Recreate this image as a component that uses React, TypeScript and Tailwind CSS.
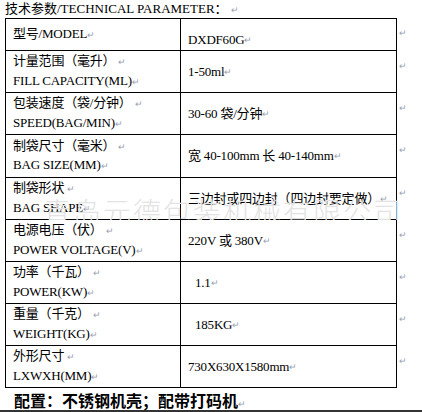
import React from 'react';

type Row = {
  label: string[];
  value: string;
  h: string;
  indent?: boolean;
  low?: boolean;
  mark?: boolean;
};

const rows: Row[] = [
  { label: ['型号/MODEL'], value: 'DXDF60G', h: 'h-[33px] border-t', low: true },
  { label: ['计量范围（毫升）', 'FILL CAPACITY(ML)'], value: '1-50ml', h: 'h-[42px]' },
  { label: ['包装速度（袋/分钟）', 'SPEED(BAG/MIN)'], value: '30-60 袋/分钟', h: 'h-[42px]' },
  { label: ['制袋尺寸（毫米）', 'BAG SIZE(MM)'], value: '宽 40-100mm 长 40-140mm', h: 'h-[43px]' },
  { label: ['制袋形状', 'BAG SHAPE'], value: '三边封或四边封（四边封要定做）', h: 'h-[42px]', mark: true },
  { label: ['电源电压（伏）', 'POWER VOLTAGE(V)'], value: '220V 或 380V', h: 'h-[42px]' },
  { label: ['功率（千瓦）', 'POWER(KW)'], value: '1.1', h: 'h-[42px]', indent: true },
  { label: ['重量（千克）', 'WEIGHT(KG)'], value: '185KG', h: 'h-[42px]', indent: true },
  { label: ['外形尺寸', 'LXWXH(MM)'], value: '730X630X1580mm', h: 'h-[42px]' },
];

const Ret = () => <span className="text-[9px] text-gray-400 align-middle">↵</span>;

export default function App() {
  return (
    <div className="w-[422px] h-[412px] bg-white text-black font-['Liberation_Serif','Noto_Sans_CJK_SC',serif] overflow-hidden">
      <div className="pl-[5px] h-[18px] leading-[18px] text-[13px]">
        技术参数/TECHNICAL PARAMETER： <Ret />
      </div>
      <div className="pl-[5px]">
        {rows.map((r, i) => (
          <div key={i} className={`relative flex ${r.mark ? 'overflow-hidden' : ''}`}>
            <div className={`flex w-[392px] border-x border-b border-black ${r.h}`}>
              <div className="w-[175px] border-r border-black pl-[7px] flex flex-col justify-center text-[13px] leading-[18px] tracking-[-0.2px]">
                {r.label.map((t, j) => (
                  <div key={j} className="whitespace-nowrap">
                    {t}
                    {j === 0 && r.label.length > 1 ? ' ' : ''}
                    <Ret />
                  </div>
                ))}
              </div>
              <div
                className={`flex-1 flex items-center whitespace-nowrap text-[13px] leading-[18px] tracking-[-0.2px] ${
                  r.indent ? 'pl-[14px]' : 'pl-[7px]'
                } ${r.low ? 'pt-[10px]' : ''}`}
              >
                {r.value}
                <Ret />
              </div>
            </div>
            <div className="pl-[2px] pt-[6px] leading-none">
              <Ret />
            </div>
            {r.mark && (
              <div className="absolute left-[38px] top-[19px] text-[28px] leading-none tracking-[2px] text-[#e3e3e3] font-['Noto_Sans_CJK_SC',sans-serif] font-light whitespace-nowrap pointer-events-none">
                青岛元德包装机械有限公司
              </div>
            )}
          </div>
        ))}
      </div>
      <div className="pl-[14px] pt-[2px] h-[24px] leading-[20px] text-[16px] font-bold font-['Noto_Sans_CJK_SC',sans-serif] border-b-2 border-[#333]">
        配置：不锈钢机壳；配带打码机
        <span className="text-[9px] font-normal text-gray-400">↵</span>
      </div>
    </div>
  );
}
